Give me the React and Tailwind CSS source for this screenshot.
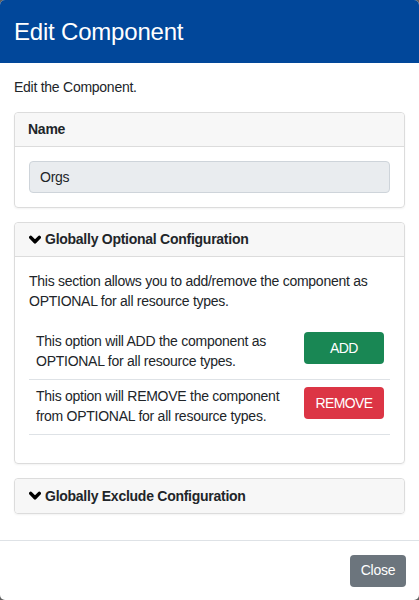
import React from 'react';

const Chevron = () => (
  <svg width="12" height="10" viewBox="0 0 12 10" className="mr-[4px] shrink-0">
    <path d="M1.7 2.4 L6 6.8 L10.3 2.4" fill="none" stroke="#000" strokeWidth="3.5" strokeLinecap="round" strokeLinejoin="round" />
  </svg>
);

const OptionRow = ({ text, label, color }) => (
  <div className="flex gap-[13px] pl-[7px] pr-[6px] pt-[6px] pb-[8px] border-b border-[#dee2e6]">
    <p className="flex-1 leading-[20px]">{text}</p>
    <button type="button" className={"w-[80px] h-[32px] mt-[1px] rounded-[4px] text-white text-[14px] tracking-[-0.6px] " + color}>{label}</button>
  </div>
);

const App = () => {
  return (
    <div className="w-[419px] h-[600px] bg-[#5f5f5f] font-[family-name:Liberation_Sans,Arial,sans-serif] text-[14px] tracking-[-0.26px] text-[#212529]">
      <div className="h-full bg-white rounded-[5px] overflow-hidden flex flex-col">
        {/* Header */}
        <div className="h-[63px] bg-[#01479a] flex items-center px-[14px]">
          <h1 className="text-white text-[24px] leading-none tracking-[-0.2px]">Edit Component</h1>
        </div>

        {/* Body */}
        <div className="p-[14px] pb-0 flex-1">
          <p className="leading-[20px] mb-[15px]">Edit the Component.</p>

          <div className="border border-[#dcdcdc] rounded-[4px] shadow-[0_1px_2px_rgba(0,0,0,0.05)] mb-[14px]">
            <div className="h-[34px] bg-[#f7f7f7] border-b border-[#dcdcdc] rounded-t-[4px] flex items-center px-[13px] font-bold">Name</div>
            <div className="p-[14px]">
              <div className="h-[32px] bg-[#e9ecef] border border-[#ced4da] rounded-[4px] flex items-center px-[10px]">Orgs</div>
            </div>
          </div>

          <div className="border border-[#dcdcdc] rounded-[4px] shadow-[0_1px_2px_rgba(0,0,0,0.05)] mb-[14px]">
            <div className="h-[34px] bg-[#f7f7f7] border-b border-[#dcdcdc] rounded-t-[4px] flex items-center px-[14px] font-bold">
              <Chevron />Globally Optional Configuration
            </div>
            <div className="p-[14px]">
              <p className="leading-[20px] mb-[14px]">This section allows you to add/remove the component as OPTIONAL for all resource types.</p>
              <div className="mb-[14px]">
                <OptionRow text="This option will ADD the component as OPTIONAL for all resource types." label="ADD" color="bg-[#198754]" />
                <OptionRow text="This option will REMOVE the component from OPTIONAL for all resource types." label="REMOVE" color="bg-[#dc3545]" />
              </div>
            </div>
          </div>

          <div className="border border-[#dcdcdc] rounded-[4px] shadow-[0_1px_2px_rgba(0,0,0,0.05)] mb-[14px]">
            <div className="h-[34px] bg-[#f7f7f7] rounded-[4px] flex items-center px-[14px] font-bold">
              <Chevron />Globally Exclude Configuration
            </div>
          </div>
        </div>

        {/* Footer */}
        <div className="border-t border-[#dee2e6] h-[60px] flex items-center justify-end px-[13px]">
          <button type="button" className="w-[56px] h-[32px] bg-[#6c757d] text-white rounded-[4px] text-[14px]">Close</button>
        </div>
      </div>
    </div>
  );
};

export default App;
